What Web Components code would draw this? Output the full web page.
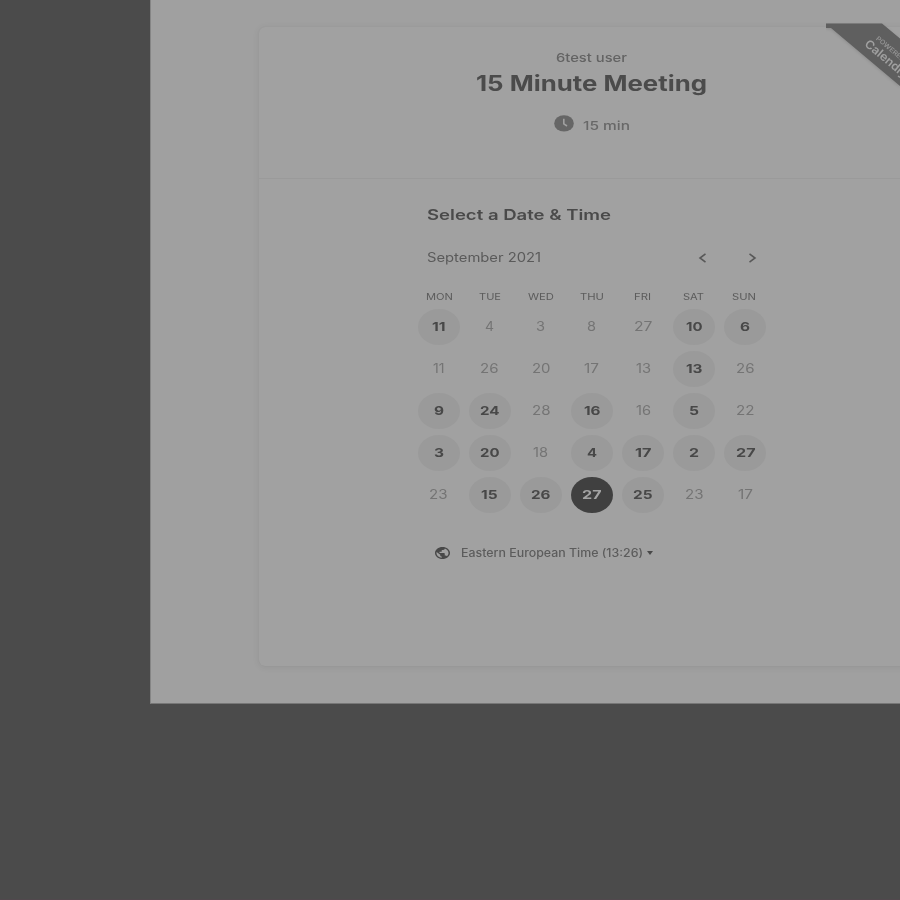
<!DOCTYPE html>
<html lang="en">
<head>
<meta charset="utf-8">
<title>15 Minute Meeting</title>
<style>
html,body{margin:0;height:100%}
body{width:900px;height:900px;overflow:hidden;background:#4b4b4b;font-family:Inter,"Liberation Sans",sans-serif;color:#4b4b4b}
</style>
</head>
<body>
<booking-page></booking-page>
<script>
// Text stretched horizontally to a given width.
class WideText extends HTMLElement {
  connectedCallback() {
    const root = this.attachShadow({mode: 'open'});
    const w = +this.getAttribute('w');
    root.innerHTML = `<style>:host{display:block;flex:none;width:${w}px;white-space:nowrap}
      span{display:inline-block;transform-origin:0 50%}</style><span><slot></slot></span>`;
    const span = root.querySelector('span');
    const natural = span.getBoundingClientRect().width || w;
    span.style.transform = `scaleX(${w / natural})`;
  }
}

class MeetingHeader extends HTMLElement {
  connectedCallback() {
    this.attachShadow({mode: 'open'}).innerHTML = `<style>
      :host{display:flex;flex-direction:column;align-items:center;box-sizing:border-box;height:152px;padding:21px 0 0;width:665px;border-bottom:1px solid #9a9a9a}
      .user{font:500 12px/20px Inter,sans-serif;color:#636363}
      .title{font:700 21px/30px Inter,sans-serif;color:#4b4b4b;margin-top:1px}
      .length{display:flex;align-items:center;gap:10px;margin-top:15px;font:500 12px/20px Inter,sans-serif;color:#686868;height:22px}
      svg{display:block;margin-top:-4px}
      .length wide-text{margin-top:1px;margin-left:-1px}
      </style>
      <wide-text class="user" w="71">6test user</wide-text>
      <wide-text class="title" w="231">15 Minute Meeting</wide-text>
      <div class="length">
        <svg width="20" height="17" viewBox="0 0 20 17"><ellipse cx="10" cy="8.4" rx="9.8" ry="8.2" fill="#666"/><path d="M9.8 3.8V8.8L13 11" fill="none" stroke="#a0a0a0" stroke-width="1.6"/></svg>
        <wide-text w="47">15 min</wide-text>
      </div>`;
  }
}

class CalendarDay extends HTMLElement {
  connectedCallback() {
    const n = this.getAttribute('n'), state = this.getAttribute('state');
    const bold = state !== 'off';
    let w = n.length === 1 ? (bold ? 10 : 9) : (bold ? 19.5 : 18.5);
    if (n === '11') w = bold ? 13.5 : 11.5;
    else if (n[0] === '1') w = bold ? 16.5 : 15;
    this.attachShadow({mode: 'open'}).innerHTML = `<style>
      :host{display:flex;align-items:center;justify-content:center;height:42.2px}
      div{width:42px;height:36px;border-radius:50%;display:flex;align-items:center;justify-content:center;font:400 12.4px/20px Inter,sans-serif;color:#747474}
      .open{background:#9a9a9a;font-weight:700;color:#484848}
      .picked{background:#404040;font-weight:700;color:#a4a4a4}
      </style><div class="${state}"><wide-text w="${w}">${n}</wide-text></div>`;
  }
}

class MonthCalendar extends HTMLElement {
  connectedCallback() {
    const names = [['MON',27],['TUE',22],['WED',26],['THU',24],['FRI',17],['SAT',21],['SUN',24]];
    const weeks = ['+11 4 3 8 27 +10 +6', '11 26 20 17 13 +13 26', '+9 +24 28 +16 16 +5 22', '+3 +20 18 +4 +17 +2 +27', '23 +15 +26 *27 +25 23 17'];
    this.attachShadow({mode: 'open'}).innerHTML = `<style>
      :host{display:block;width:358px}
      .month{display:flex;align-items:center;height:24px;padding:0 14px 0 14px;font:400 12.8px/20px Inter,sans-serif;color:#5a5a5a}
      .space{flex:1}
      svg{display:block}
      svg + svg{margin-left:41px}
      .grid{display:grid;grid-template-columns:repeat(7,51.15px)}
      .names{grid-template-columns:repeat(7,50.75px);font:400 9px/14px Inter,sans-serif;color:#5c5c5c;justify-items:center;margin:20px 0 .5px;height:15px;padding-left:1px}
      </style>
      <div class="month"><wide-text w="114">September 2021</wide-text><span class="space"></span>
        <svg width="9" height="12" viewBox="0 0 9 12" fill="none" stroke="#585858" stroke-width="1.6"><path d="M7.5 1.8L2 6L7.5 10.2"/></svg>
        <svg width="9" height="12" viewBox="0 0 9 12" fill="none" stroke="#585858" stroke-width="1.6"><path d="M1.5 1.8L7 6L1.5 10.2"/></svg></div>
      <div class="grid names">${names.map(([t, w]) => `<wide-text w="${w}">${t}</wide-text>`).join('')}</div>
      <div class="grid">${weeks.join(' ').split(' ').map(d => `<calendar-day n="${d.replace(/\D/g, '')}" state="${d[0] === '+' ? 'open' : d[0] === '*' ? 'picked' : 'off'}"></calendar-day>`).join('')}</div>`;
  }
}

class TimeZone extends HTMLElement {
  connectedCallback() {
    this.attachShadow({mode: 'open'}).innerHTML = `<style>
      :host{display:flex;align-items:center;height:20px;padding-left:22px;font:500 11.1px/20px Inter,sans-serif;color:#5c5c5c}
      svg{display:block;flex:none}
      wide-text{margin-left:11px}
      i{width:0;height:0;border:3.5px solid transparent;border-top:4px solid #484848;border-bottom:0;margin-left:4px}
      </style>
      <svg width="15" height="12" viewBox="2 2 20 20" preserveAspectRatio="none" fill="#484848"><path d="M12 2C6.48 2 2 6.48 2 12s4.48 10 10 10 10-4.48 10-10S17.52 2 12 2zm-1 17.93c-3.95-.49-7-3.85-7-7.93 0-.62.08-1.21.21-1.79L9 15v1c0 1.1.9 2 2 2v1.93zm6.9-2.54c-.26-.81-1-1.39-1.9-1.39h-1v-3c0-.55-.45-1-1-1H8v-2h2c.55 0 1-.45 1-1V7h2c1.1 0 2-.9 2-2v-.41c2.93 1.19 5 4.06 5 7.41 0 2.08-.8 3.97-2.1 5.39z"/></svg>
      <wide-text w="182">Eastern European Time (13:26)</wide-text><i></i>`;
  }
}

class CornerRibbon extends HTMLElement {
  connectedCallback() {
    this.attachShadow({mode: 'open'}).innerHTML = `<style>
      :host{display:block;position:absolute;left:826px;top:23px;width:74px;height:70px;overflow:hidden}
      svg{display:block;filter:drop-shadow(0 1px 1.5px #0002)}
      .text{position:absolute;left:43px;top:6px;transform:rotate(40deg);transform-origin:0 50%;width:50px}
      .by{font:600 6.6px/8px Inter,sans-serif;color:#929292;margin-left:5px}
      .brand{font:600 12px/12px Inter,sans-serif;color:#a0a0a0}
      </style>
      <svg width="74" height="70" viewBox="0 0 74 70"><path d="M0 .6H56L74 15.5V63L5 5H0Z" fill="#5f5f5f"/></svg>
      <div class="text"><wide-text class="by" w="42">POWERED BY</wide-text><wide-text class="brand" w="48">Calendly</wide-text></div>`;
  }
}

class BookingPage extends HTMLElement {
  connectedCallback() {
    this.attachShadow({mode: 'open'}).innerHTML = `<style>
      :host{display:block;width:900px;height:900px;overflow:hidden;position:relative;box-sizing:border-box;padding-left:150px;border-bottom:1px solid #51484d}
      .panel{box-sizing:border-box;height:704px;padding:27px 0 0 108px;background:#a0a0a0;border-left:1px solid #858585;border-bottom:1px solid #777;overflow:hidden}
      .card{width:700px;height:639px;border-radius:6px;background:#a1a1a1;box-shadow:0 1px 7px #00000014,0 0 1px #00000010}
      .body{padding:26px 0 0 154px}
      h2{margin:0;padding-left:14px;font:600 14.6px/20px Inter,sans-serif;color:#4a4a4a}
      month-calendar{margin-top:21px}
      time-zone{margin-top:26.5px}
      </style>
      <div class="panel"><div class="card"><meeting-header></meeting-header>
        <div class="body"><h2><wide-text w="184">Select a Date &amp; Time</wide-text></h2>
        <month-calendar></month-calendar><time-zone></time-zone></div></div></div>
      <corner-ribbon></corner-ribbon>`;
  }
}
customElements.define('wide-text', WideText);
customElements.define('meeting-header', MeetingHeader);
customElements.define('calendar-day', CalendarDay);
customElements.define('month-calendar', MonthCalendar);
customElements.define('time-zone', TimeZone);
customElements.define('corner-ribbon', CornerRibbon);
customElements.define('booking-page', BookingPage);
</script>
</body>
</html>
